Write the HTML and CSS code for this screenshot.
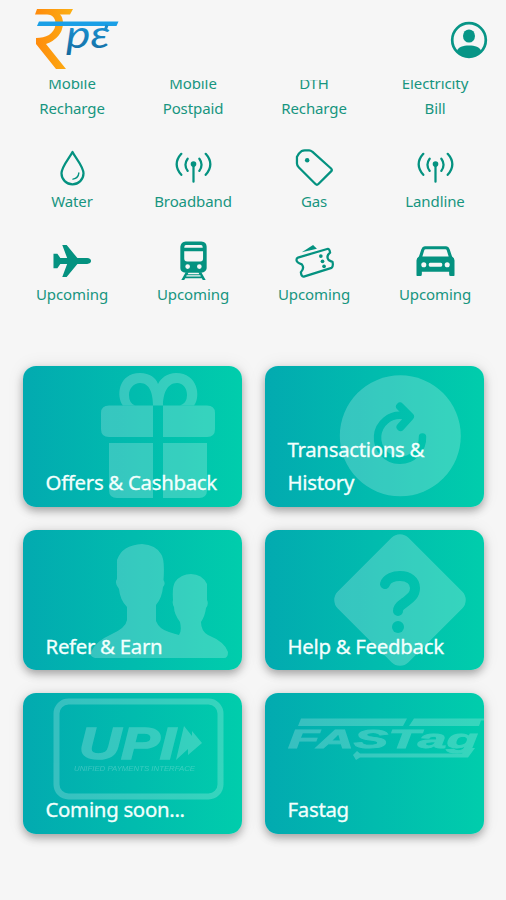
FILE: index.html
```html
<!DOCTYPE html>
<html lang="en">
  <head>
    <meta charset="UTF-8" />
    <meta name="viewport" content="width=device-width, initial-scale=1.0" />
    <title>RPE</title>
    <link rel="stylesheet" href="styles.css">
  </head>
  <body>
    <header class="header">
      <svg class="logo" viewBox="0 0 87 64" width="87" height="64">
        <defs>
          <linearGradient id="orange" x1="0" y1="0" x2="1" y2="0">
            <stop offset="0" stop-color="#ff8a0c" />
            <stop offset="1" stop-color="#fbb014" />
          </linearGradient>
          <linearGradient id="blue" x1="0" y1="0" x2="0" y2="1">
            <stop offset="0" stop-color="#1ba6ee" />
            <stop offset="1" stop-color="#14699c" />
          </linearGradient>
        </defs>
        <path fill="url(#orange)" d="M5 1H41L38 6.500H28Q31 9 31 16Q30 30 14 36L34 61H24L4 36V30C14 30 22 26 23.500 17C24 11 21 6.500 15 6.500H3Z" />
        <path fill="#1a9fe6" d="M7 13.500H86.500L84.500 18H5Z" />
        <text class="logo-text" x="34" y="40" textLength="44" lengthAdjust="spacingAndGlyphs" fill="url(#blue)">pε</text>
        <path fill="none" stroke="#1a8bcb" stroke-width="3" d="M75 17Q74 20 73 23" />
      </svg>
      <svg class="user-icon" viewBox="0 0 38 38" width="38" height="38">
        <circle cx="19" cy="19" r="16.8" fill="none" stroke="currentColor" stroke-width="2.7" />
        <ellipse cx="19" cy="15" rx="6" ry="6.6" fill="currentColor" />
        <path fill="currentColor" d="M7 30C8 26 13 24.5 19 24.5S30 26 31 30Q26 36 19 36T7 30Z" />
      </svg>
    </header>

    <section class="services">
      <div class="service service-text">Mobile<br />Recharge</div>
      <div class="service service-text">Mobile<br />Postpaid</div>
      <div class="service service-text">DTH<br />Recharge</div>
      <div class="service service-text">Electricity<br />Bill</div>

      <div class="service">
        <svg class="icon line" viewBox="0 0 40 40">
          <path d="M20 4C17 10 8.700 19 8.700 26A11.300 11.300 0 0 0 31.300 26C31.300 19 23 10 20 4Z" />
          <path class="thin" d="M26.500 25.500Q26 31 20.500 32" />
        </svg>
        <span>Water</span>
      </div>
      <div class="service">
        <svg class="icon line" viewBox="0 0 40 40">
          <path d="M20 17V34.500M14 11Q9.500 17 14 23.500M26 11Q30.500 17 26 23.500M7.500 6Q-2 16.500 7.500 27.500M32.500 6Q42 16.500 32.500 27.500" />
          <circle class="solid" cx="20" cy="16.500" r="2.900" />
        </svg>
        <span>Broadband</span>
      </div>
      <div class="service">
        <svg class="icon line" viewBox="0 0 40 40">
          <path d="M2 9Q3 6 7 3Q8 2.500 10 2.500H14.500Q16 2.500 18 4L37 21Q38.500 22.500 37 24L24 37Q22.500 38.500 21 37L4 20Q2 18 2 16Z" />
          <circle class="solid" cx="12.500" cy="12.500" r="2.300" />
        </svg>
        <span>Gas</span>
      </div>
      <div class="service">
        <svg class="icon line" viewBox="0 0 40 40">
          <path d="M20 17V34.500M14 11Q9.500 17 14 23.500M26 11Q30.500 17 26 23.500M7.500 6Q-2 16.500 7.500 27.500M32.500 6Q42 16.500 32.500 27.500" />
          <circle class="solid" cx="20" cy="16.500" r="2.900" />
        </svg>
        <span>Landline</span>
      </div>

      <div class="service">
        <svg class="icon fill" viewBox="0 0 40 40">
          <path d="M9.500 4H14L25 17.500H35Q39 18 39 20.500T35 23.500H25L14 37H9.500L14.500 23.500H7.500L4.500 28H.5V13H4.500L7.500 17.500H14.500Z" />
        </svg>
        <span>Upcoming</span>
      </div>
      <div class="service">
        <svg class="icon fill" viewBox="0 0 40 40">
          <path fill-rule="evenodd" d="M12 .5H28Q33.500 1 33.500 6V28Q33 32 28 32.500H12Q6.500 32 6.500 28V6Q7 1 12 .5ZM12 4.200Q10.500 4.500 10.500 7H29.500Q29.500 4.500 28 4.200ZM10.500 10.500V18Q10.500 21 13.500 21H27Q29.800 21 29.800 18V10.500ZM14 23.800A2.400 2.400 0 1 0 14 28.600A2.400 2.400 0 1 0 14 23.800ZM26 23.800A2.400 2.400 0 1 0 26 28.600A2.400 2.400 0 1 0 26 23.800Z" />
          <path d="M12 32H15L14 34H26L25 32H28L32.500 40H29.500L28.500 38.200H11.500L10.500 40H7.500ZM13 35.200L12.500 36.400H27.500L27 35.200Z" />
        </svg>
        <span>Upcoming</span>
      </div>
      <div class="service">
        <svg class="icon line" viewBox="0 0 40 40">
          <path d="M3 17L33 8.200Q35.500 7.500 36 12Q31.500 15.500 34.500 19.500Q36.500 21 38.500 21.500Q39.500 26 37.500 27.500L9 36.500Q6.500 37 6 32Q10 28 7 24Q1.500 22 1.500 19.500Q1.500 17.500 3 17Z" />
          <path class="solid" d="M7 11.500L18.500 4L22.500 8Z" />
          <circle class="solid" cx="26.500" cy="15.500" r="1.900" />
          <circle class="solid" cx="28.200" cy="20.800" r="1.900" />
          <circle class="solid" cx="29.800" cy="26" r="1.900" />
        </svg>
        <span>Upcoming</span>
      </div>
      <div class="service">
        <svg class="icon fill" viewBox="0 0 40 40">
          <path fill-rule="evenodd" d="M9 5.500H31Q33.500 5.500 34.500 8.500L37 16Q39.500 17.500 39.500 20V35Q39.500 36 38 36H35.500Q34 36 34 34V31.500H6V34Q6 36 4.500 36H2Q.5 36 .5 35V20Q.5 17.500 3 16L5.500 8.500Q6.500 5.500 9 5.500ZM10 8.500Q8.700 8.500 8.300 10L6.500 16H33.500L31.700 10Q31.300 8.500 30 8.500ZM8 21.800A2.600 2.600 0 1 0 8 27A2.600 2.600 0 1 0 8 21.800ZM32 21.800A2.600 2.600 0 1 0 32 27A2.600 2.600 0 1 0 32 21.800ZM14.500 22.300Q13 22.300 13 24.400T14.500 26.500H25.500Q27 26.500 27 24.400T25.500 22.300Z" />
        </svg>
        <span>Upcoming</span>
      </div>
    </section>

    <main class="cards">
      <div class="card">
        <svg class="card-art" viewBox="0 0 219 141">
          <path fill-rule="evenodd" d="M100 39.500C93 31 95 7 117 7C127 7 133 12 135 18C138 12 144 7 153 7C175 7 178 31 171 39.500ZM112 39.500Q106 37 106 29C106 22 111 17 117 17C127 17 130 28 130 39.500ZM140 39.500C140 28 144 17 154 17C160 17 164 22 164 29Q164 37 157 39.500Z" />
          <path d="M86 39.500H130V71H86Q78 71 78 63V47Q78 39.500 86 39.500ZM140 39.500H184Q192 39.500 192 47V63Q192 71 184 71H140ZM86 77H130V132H94Q86 132 86 124ZM140 77H184V124Q184 132 176 132H140Z" />
        </svg>
        <span class="card-title">Offers &amp; Cashback</span>
      </div>
      <div class="card">
        <svg class="card-art" viewBox="0 0 219 141">
          <mask id="arrow">
            <rect width="219" height="141" fill="#fff" />
            <path class="cut" d="M157.500 71A22.500 22.500 0 1 1 138 49.500" />
            <path class="cut cut-head" d="M135 40.500L145 50.500L135.500 61" />
          </mask>
          <circle cx="135.300" cy="69.800" r="60.500" mask="url(#arrow)" />
        </svg>
        <span class="card-title">Transactions &amp;<br />History</span>
      </div>
      <div class="card">
        <svg class="card-art" viewBox="0 0 219 141">
          <path d="M119 14Q133 15 138 24Q142 29 140.500 50Q143 54 140 57Q139 68 133 75V91Q136 99 146 102Q152 104 156 105Q159 101 157 92Q151 84 151 77Q149 74 150 70Q149 57 152 52Q158 44 168 44Q179 44 184 54V70Q186 74 183 78Q182 86 178 92Q178 101 185 105Q202 112 205 122Q205 128 201 128H72Q66 126 68 122Q73 111 87 105Q103 98 104 90V77Q97 70 96 59Q91 53 94 49V30Q99 15 119 14Z" />
        </svg>
        <span class="card-title">Refer &amp; Earn</span>
      </div>
      <div class="card">
        <svg class="card-art" viewBox="0 0 219 141">
          <mask id="help">
            <rect width="219" height="141" fill="#fff" />
            <path class="cut cut-help" d="M120 54C122 48 129 46 135 46C144 46 150 51 150 58C150 66 144 69 139 73Q133 77 133 81" />
            <circle cx="133" cy="97" r="6" />
          </mask>
          <g mask="url(#help)">
            <rect x="85" y="20" width="100" height="100" rx="12" transform="rotate(45 135 70)" />
          </g>
        </svg>
        <span class="card-title">Help &amp; Feedback</span>
      </div>
      <div class="card">
        <svg class="card-art" viewBox="0 0 219 141">
          <rect class="frame" x="33.500" y="8.500" width="164" height="95" rx="12" />
          <text class="upi" x="56" y="66" textLength="97" lengthAdjust="spacingAndGlyphs">UPI</text>
          <path d="M161 33L169 43V38L179 50L165 62V56L153 67Z" />
          <text class="upi-sub" x="51" y="78" textLength="121" lengthAdjust="spacingAndGlyphs">UNIFIED PAYMENTS INTERFACE</text>
        </svg>
        <span class="card-title">Coming soon...</span>
      </div>
      <div class="card">
        <svg class="card-art" viewBox="0 0 219 141">
          <path d="M36 25.500H142L138 33H33ZM149 25.500H219V27.500H216L214 33H144ZM88 62L92 58L95 60.500H197L203 55H210L203 64.500H95L91 67Z" />
          <text class="fastag" x="23" y="55" textLength="190" lengthAdjust="spacingAndGlyphs">FASTag</text>
        </svg>
        <span class="card-title">Fastag</span>
      </div>
    </main>
  </body>
</html>
```

FILE: styles.css
```css
* {
  box-sizing: border-box;
}

body {
  margin: 0;
  height: 900px;
  overflow: hidden;
  background-color: #f6f6f6;
  font-family: "Noto Sans", "Open Sans", sans-serif;
}

.header {
  position: relative;
  z-index: 1;
  display: flex;
  justify-content: space-between;
  align-items: center;
  height: 80px;
  padding: 0 18px 0 32px;
  background-color: #f6f6f6;
  border-bottom: 1px solid #f6f6f6;
}

.logo-text {
  font-family: Lato, sans-serif;
  font-size: 38px;
  font-style: italic;
}

.user-icon {
  color: #079586;
}

/* list is scrolled a little under the header */
.services {
  display: grid;
  grid-template-columns: repeat(4, 121px);
  justify-content: center;
  row-gap: 13px;
  margin-top: -9px;
  padding-left: 1px;
}

.service {
  display: flex;
  flex-direction: column;
  align-items: center;
  height: 80px;
  color: #17957f;
  font-size: 15px;
  line-height: 25px;
  letter-spacing: -0.1px;
  text-align: center;
}

.service-text {
  display: block;
  height: 64px;
}

.icon {
  width: 39px;
  height: 39px;
  margin-bottom: 2px;
  color: #049280;
}

.line {
  fill: none;
  stroke: currentColor;
  stroke-width: 2.3;
  stroke-linecap: round;
  stroke-linejoin: round;
}

.thin {
  stroke-width: 1.4;
}

.solid {
  fill: currentColor;
  stroke: none;
}

.fill {
  fill: currentColor;
}

.cards {
  display: grid;
  grid-template-columns: 219px 219px;
  grid-auto-rows: 140.5px;
  justify-content: center;
  gap: 23px;
  margin-top: 45px;
}

.card {
  position: relative;
  display: flex;
  align-items: flex-end;
  padding: 0 0 7px 23px;
  border-radius: 13px;
  overflow: hidden;
  background: linear-gradient(to right, #02aab0, #00cdac);
  box-shadow: 0 4px 8px rgba(0, 0, 0, 0.3), 0 0 18px rgba(0, 0, 0, 0.08);
}

.card-art {
  position: absolute;
  top: 0;
  left: 0;
  width: 219px;
  height: 141px;
  fill: #fff;
  opacity: 0.21;
}

.card-art mask circle {
  fill: #000;
}

.cut {
  fill: none;
  stroke: #000;
  stroke-width: 7.5;
  stroke-linecap: round;
  stroke-linejoin: round;
}

.cut-head {
  stroke-width: 8;
}

.cut-help {
  stroke-width: 10;
}

.frame {
  fill: none;
  stroke: #fff;
  stroke-width: 6;
}

.upi {
  font-family: "Liberation Sans", sans-serif;
  font-size: 45px;
  font-weight: bold;
  font-style: italic;
  stroke: #fff;
  stroke-width: 1.5;
}

.upi-sub {
  font-family: "Liberation Sans", sans-serif;
  font-size: 8px;
  font-style: italic;
}

.fastag {
  font-family: "Liberation Sans", sans-serif;
  font-size: 26px;
  font-weight: bold;
  font-style: italic;
  stroke: #fff;
  stroke-width: 0.8;
}

.card-title {
  position: relative;
  color: #f2fffd;
  font-size: 20.4px;
  line-height: 33.5px;
  letter-spacing: -0.3px;
  white-space: nowrap;
  -webkit-text-stroke: 0.3px #f2fffd;
}
```
